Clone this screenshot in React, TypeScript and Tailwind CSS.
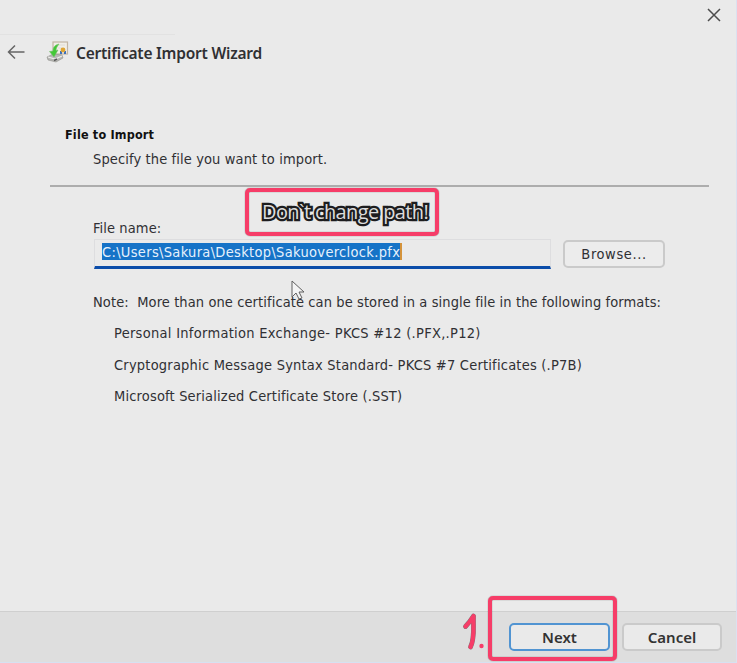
const body = "font-['DejaVu_Sans_Condensed','DejaVu_Sans',sans-serif] [font-stretch:condensed] text-[14.5px] text-[#303034] whitespace-pre";

function CertificateIcon() {
  return (
    <svg width="24" height="24" viewBox="0 0 24 24" className="shrink-0">
      <rect x="7" y="2" width="14.5" height="12" fill="#f1eee7" stroke="#c2b5a4" strokeWidth="1.2" />
      <path d="M10 5h9M12 8h4" stroke="#dedbd4" />
      <path d="M1 17l6-3 9 1 1 3-7 4-8-2z" fill="#b7b7b4" stroke="#85857f" strokeWidth=".5" />
      <path d="M2 17l7 2 7-3" stroke="#ededeb" strokeWidth="1.3" fill="none" />
      <path d="M8 20.5l3-1.500" stroke="#555" strokeWidth="1.5" />
      <path d="M13 4C9 5 7 7 7 11L3.5 11.5 8 17l4-7-2 .5c0-2 1-4 3-6.500z" fill="#43c936" stroke="#73bd6b" strokeWidth=".6" />
      <path d="M14 11h2v3h-2zM18 11h2v3h-2z" fill="#3d71bb" />
      <circle cx="17" cy="10" r="2.400" fill="#dfa532" />
    </svg>
  );
}

function Header() {
  return (
    <header className="flex h-[117px] items-start justify-between">
      <div className="w-[300px] pt-[34px]">
        <div className="h-px w-[175px] bg-[#e2e2e2]" />
        <div className="flex items-center pl-[7px] pt-[4px]">
          <svg width="19" height="18" viewBox="0 0 19 18" fill="none" stroke="#666" strokeWidth="1.5">
            <path d="M17.500 9H1.500M8 2.500L1.500 9 8 15.500" />
          </svg>
          <div className="w-5" />
          <CertificateIcon />
          <h1 className="ml-[6px] mt-[2px] whitespace-nowrap font-['Noto_Sans',sans-serif] text-[15.500px] leading-6 font-semibold tracking-[-0.22px] text-[#303033]">Certificate Import Wizard</h1>
        </div>
      </div>
      <svg className="mt-2 mr-[15px]" width="14" height="14" viewBox="0 0 14 14" stroke="#4c4c4c" strokeWidth="1.500">
        <path d="M1 1l12 12M13 1L1 13" />
      </svg>
    </header>
  );
}

function Annotation() {
  return (
    <div className="absolute left-[245px] top-[188px] flex h-[48px] w-[194px] items-center rounded-[5px] border-4 border-[#f63d68] pl-[13px] shadow-[0_0_1px_#444,inset_0_0_1px_#444]">
      <span className="whitespace-nowrap font-['Open_Sans',sans-serif] text-[20px] leading-[30px] font-normal tracking-[-0.62px] text-[#dcdcdc] [-webkit-text-stroke:4.5px_#1d1d1f] [paint-order:stroke_fill] [stroke-linejoin:round]">Don`t change path!</span>
    </div>
  );
}

export default function App() {
  return (
    <div className="relative flex h-[663px] w-[737px] flex-col overflow-hidden border-r border-[#dce1f0] bg-[#eaeaea]">
      <Header />
      <main className="h-[494px]">
        <h2 className="ml-[65px] mt-[8px] h-[20px] w-max whitespace-pre font-['DejaVu_Sans_Condensed','DejaVu_Sans',sans-serif] text-[12.500px] leading-5 font-bold tracking-[0.18px] text-[#111] [font-stretch:condensed]">File to Import</h2>
        <p className={`${body} ml-[93px] mt-[3px] h-[22px] w-max leading-[22px] tracking-[0.12px]`}>Specify the file you want to import.</p>
        <div className="ml-[50px] mt-[15px] h-[2px] w-[659px] bg-[#adadad]" />
        <p className={`${body} ml-[93px] mt-[30px] h-[22px] w-max leading-[22px] tracking-[0.1px]`}>File name:</p>
        <div className="ml-[94px] flex items-start">
          <div className="flex h-[30px] w-[457px] items-start border border-b-[3px] border-[#dddddf] border-b-[#0b4daa] pl-[7px] pt-[3px]">
            <span className="h-[17px] w-[300px] whitespace-pre border-r-2 border-[#d4933b] bg-[#1673c7] font-['DejaVu_Sans_Condensed','DejaVu_Sans',sans-serif] text-[14.500px] leading-[18px] tracking-[0.32px] text-[#e6f1fc] [font-stretch:condensed]">C:\Users\Sakura\Desktop\Sakuoverclock.pfx</span>
          </div>
          <button className={`${body} ml-[12px] mt-px flex h-[28px] w-[102px] items-center justify-center rounded-[5px] border-2 border-[#cacaca] bg-[#ececec] pt-[2px] tracking-[0.6px]`}>Browse...</button>
        </div>
        <p className={`${body} ml-[93px] mt-[22px] h-[22px] w-max leading-[22px] tracking-[0.095px]`}>Note:  More than one certificate can be stored in a single file in the following formats:</p>
        <p className={`${body} ml-[114px] mt-[9px] h-[22px] w-max leading-[22px] tracking-[0.29px]`}>Personal Information Exchange- PKCS #12 (.PFX,.P12)</p>
        <p className={`${body} ml-[114px] mt-[10px] h-[22px] w-max leading-[22px] tracking-[0.21px]`}>Cryptographic Message Syntax Standard- PKCS #7 Certificates (.P7B)</p>
        <p className={`${body} ml-[114px] mt-[9px] h-[22px] w-max leading-[22px] tracking-[0.17px]`}>Microsoft Serialized Certificate Store (.SST)</p>
      </main>
      <footer className="flex h-[52px] items-start justify-end gap-[12px] border-t border-b border-t-[#cfcfcf] border-b-[#d6e1f1] bg-[#dedede] pr-[14px] pt-[11px] font-['Noto_Sans',sans-serif] text-[15px] font-semibold text-[#333]">
        <button className="flex h-[28px] w-[101px] items-center justify-center rounded-[5px] border-2 border-[#5194d2] bg-[#eaeaea]">Next</button>
        <button className="flex h-[28px] w-[100px] items-center justify-center rounded-[5px] border-2 border-[#cacaca] bg-[#eaeaea]">Cancel</button>
      </footer>
      <Annotation />
      <div className="absolute left-[488px] top-[596px] h-[65px] w-[129px] rounded-[5px] border-4 border-[#f63d68] shadow-[0_0_1px_#444,inset_0_0_1px_#444]" />
      <svg className="absolute left-[462px] top-[611px]" width="25" height="40" viewBox="0 0 25 40" fill="none" strokeLinecap="round" strokeLinejoin="round">
        <path d="M3.500 15.500C6 13 9 9 11.500 5C11 15 13 28 8.500 36" stroke="#777" strokeWidth="4.800" />
        <path d="M3.500 15.500C6 13 9 9 11.500 5C11 15 13 28 8.500 36" stroke="#f63d68" strokeWidth="4.200" />
        <circle cx="19.500" cy="35" r="2.200" fill="#f63d68" />
      </svg>
      <svg className="absolute left-[291px] top-[280px]" width="15" height="22" viewBox="0 0 15 22">
        <path d="M1 1v16l4-4 3 6 3-1-3-6h5z" fill="#f4f4f4" stroke="#606060" strokeWidth="1" />
      </svg>
    </div>
  );
}
